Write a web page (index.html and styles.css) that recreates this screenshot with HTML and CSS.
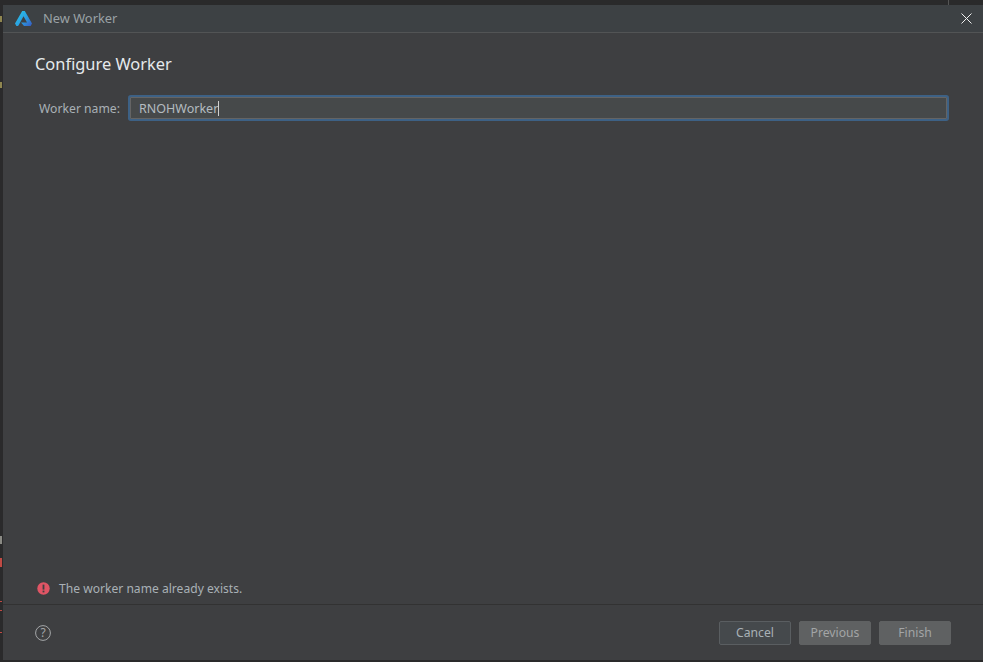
FILE: index.html
```html
<!DOCTYPE html>
<html lang="en">
<head>
<meta charset="utf-8">
<title>New Worker</title>
<link rel="stylesheet" href="styles.css">
</head>
<body>
<div class="backdrop">
  <span class="top-divider"></span>
  <span class="bit bit-yellow bit-a"></span>
  <span class="bit bit-yellow bit-b"></span>
  <span class="bit bit-grey bit-c"></span>
  <span class="bit bit-red bit-d"></span>
  <span class="bit bit-red bit-e"></span>
  <span class="bit bit-red bit-f"></span>
  <span class="bit bit-red bit-g"></span>
  <section class="dialog">
    <header class="titlebar">
      <svg class="logo" width="17" height="15" viewBox="0 0 17 15">
        <defs>
          <linearGradient id="lg" x1="0.1" y1="0.2" x2="0.95" y2="0.9">
            <stop offset="0" stop-color="#2ac0e8"/>
            <stop offset="0.55" stop-color="#2a9be0"/>
            <stop offset="1" stop-color="#3564c8"/>
          </linearGradient>
        </defs>
        <path d="M7.2 0 H9.8 L17 12.6 L15.6 15 H9 L6 11.4 H12 L8.5 5.2 L3.8 14 L3 15 H1.4 L0 12.6 Z" fill="url(#lg)"/>
      </svg>
      <span class="title">New Worker</span>
      <svg class="close" width="11" height="11" viewBox="0 0 11 11">
        <path d="M0.5 0.5 L10.5 10.5 M10.5 0.5 L0.5 10.5" stroke="#f0f0f0" stroke-width="1" fill="none"/>
      </svg>
    </header>
    <main class="content">
      <h1 class="heading">Configure Worker</h1>
      <div class="field">
        <label class="label" for="name">Worker name:</label>
        <div class="input" id="name"><span>RNOHWorker</span><i class="caret"></i></div>
      </div>
    </main>
    <div class="error">
      <svg width="13" height="13" viewBox="0 0 13 13">
        <circle cx="6.5" cy="6.5" r="6.2" fill="#e05565"/>
        <rect x="5.6" y="2.6" width="1.8" height="5" fill="#3e3f41"/>
        <rect x="5.6" y="8.6" width="1.8" height="1.8" fill="#3e3f41"/>
      </svg>
      <span>The worker name already exists.</span>
    </div>
    <footer class="footer">
      <svg class="help" width="16" height="16" viewBox="0 0 16 16">
        <circle cx="8" cy="8" r="7.4" fill="none" stroke="#a4a6a8" stroke-width="1"/>
        <text x="8" y="12.2" text-anchor="middle" class="help-mark">?</text>
      </svg>
      <div class="buttons">
        <button class="btn btn-cancel">Cancel</button>
        <button class="btn btn-muted">Previous</button>
        <button class="btn btn-muted">Finish</button>
      </div>
    </footer>
  </section>
</div>
</body>
</html>
```
FILE: styles.css
```css
* { box-sizing: border-box; }
html, body { margin: 0; height: 100%; }
body {
  background: #2b2b2b;
  font-family: "Noto Sans", "Open Sans", sans-serif;
  font-size: 13px;
  color: #a9b1b6;
  overflow: hidden;
}
.backdrop {
  position: relative;
  width: 983px;
  height: 662px;
  padding: 5px 0 2px 3px;
  background: #2a2a2b;
}
.top-divider {
  position: absolute;
  left: 948px;
  top: 0;
  width: 1px;
  height: 5px;
  background: #555;
}
.bit { position: absolute; left: 0; width: 2px; }
.bit-yellow { background: #8f8650; height: 6px; }
.bit-grey { background: #8a8a84; height: 8px; }
.bit-red { background: #c04a44; height: 1px; }
.bit-a { top: 16px; }
.bit-b { top: 82px; }
.bit-c { top: 536px; }
.bit-d { top: 558px; height: 9px; }
.bit-e { top: 601px; }
.bit-f { top: 610px; }
.bit-g { top: 632px; }
.dialog {
  height: 655px;
  background: #3e3f41;
  display: flex;
  flex-direction: column;
}
.titlebar {
  height: 28px;
  flex: none;
  display: flex;
  align-items: center;
  padding: 0 11px 0 12px;
  background: #3d4144;
  border-bottom: 1px solid #525455;
}
.logo { flex: none; }
.title { margin-left: 11px; margin-top: -2px; font-size: 12.85px; color: #9aa2a6; }
.close { margin-left: auto; }
.content {
  flex: 1;
  padding: 20px 32px 0;
}
.heading {
  margin: 0;
  font-size: 16.4px;
  font-weight: 400;
  line-height: 22px;
  color: #e6eaec;
}
.field {
  display: flex;
  align-items: center;
  margin-top: 22px;
  padding-left: 4px;
}
.label { width: 91px; flex: none; font-size: 12.2px; color: #a9b1b6; }
.input {
  width: 817px;
  height: 22px;
  display: flex;
  align-items: center;
  padding-left: 8px;
  font-size: 12.5px;
  color: #b4bcc0;
  background: #46494a;
  border: 1px solid #646464;
  border-radius: 1px;
  box-shadow: 0 0 0 2px #3d6185;
}
.caret { width: 1px; height: 15px; background: #d0d0d0; }
.error {
  flex: none;
  display: flex;
  align-items: center;
  gap: 9px;
  height: 31px;
  padding-left: 34px;
  font-size: 12.1px;
  color: #a9b1b6;
}
.footer {
  flex: none;
  height: 56px;
  display: flex;
  align-items: center;
  justify-content: space-between;
  padding: 0 32px 0 32px;
  border-top: 1px solid #323232;
}
.help-mark { font-size: 12px; fill: #a4a6a8; font-family: "Noto Sans", sans-serif; }
.buttons { display: flex; gap: 8px; }
.btn {
  width: 72px;
  height: 24px;
  padding: 0;
  font: inherit;
  font-size: 12.2px;
  border-radius: 2px;
}
.btn-cancel { background: #45494c; border: 1px solid #5a5e61; color: #a9b1b6; }
.btn-muted { background: #5f6162; border: 1px solid #5f6162; color: #a3a5a6; }
```
